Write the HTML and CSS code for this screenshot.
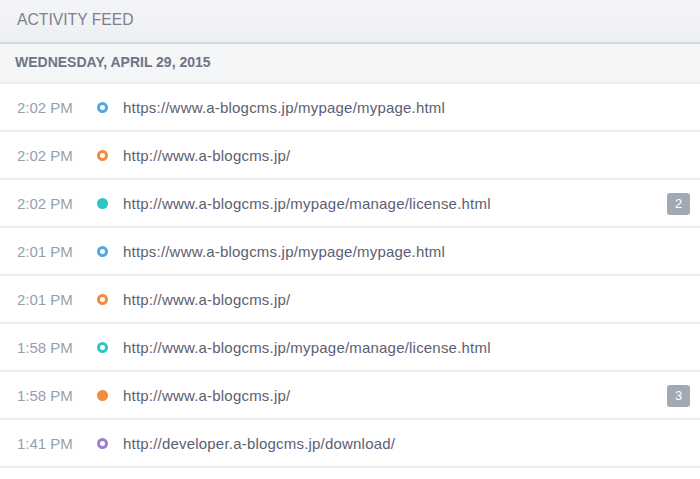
FILE: index.html
```html
<!DOCTYPE html>
<html>
<head>
<meta charset="utf-8">
<link rel="stylesheet" href="styles.css">
</head>
<body>
<div class="feed">
  <div class="feed-title">Activity Feed</div>
  <div class="feed-date">Wednesday, April 29, 2015</div>
  <ul class="feed-list">
    <li class="item"><span class="time">2:02 PM</span><span class="dot ring blue"></span><span class="url">https://www.a-blogcms.jp/mypage/mypage.html</span></li>
    <li class="item"><span class="time">2:02 PM</span><span class="dot ring orange"></span><span class="url">http://www.a-blogcms.jp/</span></li>
    <li class="item"><span class="time">2:02 PM</span><span class="dot solid teal"></span><span class="url">http://www.a-blogcms.jp/mypage/manage/license.html</span><span class="badge">2</span></li>
    <li class="item"><span class="time">2:01 PM</span><span class="dot ring blue"></span><span class="url">https://www.a-blogcms.jp/mypage/mypage.html</span></li>
    <li class="item"><span class="time">2:01 PM</span><span class="dot ring orange"></span><span class="url">http://www.a-blogcms.jp/</span></li>
    <li class="item"><span class="time">1:58 PM</span><span class="dot ring teal"></span><span class="url">http://www.a-blogcms.jp/mypage/manage/license.html</span></li>
    <li class="item"><span class="time">1:58 PM</span><span class="dot solid orange"></span><span class="url">http://www.a-blogcms.jp/</span><span class="badge">3</span></li>
    <li class="item"><span class="time">1:41 PM</span><span class="dot ring purple"></span><span class="url">http://developer.a-blogcms.jp/download/</span></li>
  </ul>
</div>
</body>
</html>
```

FILE: styles.css
```css
* { box-sizing: border-box; }
html, body { margin: 0; padding: 0; background: #ffffff; }
body { font-family: "Liberation Sans", Arial, sans-serif; width: 700px; height: 479px; overflow: hidden; }

.feed-title {
  height: 44px;
  padding: 0 17px 3px;
  display: flex;
  align-items: center;
  text-transform: uppercase;
  font-size: 15.7px;
  color: #7b8090;
  background: linear-gradient(#f4f5f7, #eeeff3);
  border-bottom: 2px solid #d3d9e2;
  box-shadow: 0 1px 0 #e9ecf1;
}

.feed-date {
  height: 40px;
  padding: 0 15px 2px;
  display: flex;
  align-items: center;
  text-transform: uppercase;
  font-weight: bold;
  font-size: 14px;
  color: #6e7486;
  background: #f5f6f8;
  border-bottom: 2px solid #eaeef3;
}

.feed-list { list-style: none; margin: 0; padding: 0; }

.item {
  height: 48px;
  display: flex;
  align-items: center;
  border-bottom: 2px solid #ebeef3;
  padding-top: 1px;
  font-size: 15px;
}

.time {
  width: 97px;
  padding-left: 17px;
  color: #9a9eab;
  flex: none;
}

.dot {
  width: 11px;
  height: 11px;
  border-radius: 50%;
  flex: none;
  margin-right: 15px;
}
.dot.ring { border: 3px solid currentColor; background: #fff; }
.dot.solid { background: currentColor; }
.blue { color: #55a6e0; }
.orange { color: #f18b3f; }
.teal { color: #2cc6c6; }
.purple { color: #9b7fcf; }

.url { color: #5b6172; flex: 1; letter-spacing: 0.2px; }

.badge {
  flex: none;
  width: 23px;
  height: 22px;
  margin-right: 10px;
  border-radius: 3px;
  background: #a3a8b5;
  color: #ffffff;
  font-size: 13px;
  display: flex;
  align-items: center;
  justify-content: center;
}
```
